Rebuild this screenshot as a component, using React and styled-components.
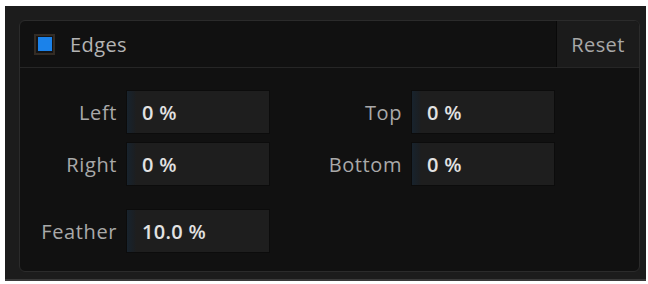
import styled, { createGlobalStyle } from 'styled-components'

const GlobalStyle = createGlobalStyle`
    html, body {
        margin: 0;
        padding: 0;
        background: #ffffff;
    }
    * {
        box-sizing: border-box;
    }
`

const rows = [
    [
        { label: 'Left', value: '0 %' },
        { label: 'Top', value: '0 %' },
    ],
    [
        { label: 'Right', value: '0 %' },
        { label: 'Bottom', value: '0 %' },
    ],
]

function App() {
    return (
        <>
            <GlobalStyle />
            <Frame>
                <Panel>
                    <Header>
                        <Title>
                            <Checkbox>
                                <Check />
                            </Checkbox>
                            <span>Edges</span>
                        </Title>
                        <ResetButton>Reset</ResetButton>
                    </Header>
                    <Body>
                        <Grid>
                            {rows.map((row, i) =>
                                row.map((field) => (
                                    <Field key={field.label + i}>
                                        <Label>{field.label}</Label>
                                        <Input>{field.value}</Input>
                                    </Field>
                                ))
                            )}
                        </Grid>
                        <FeatherRow>
                            <Field>
                                <Label>Feather</Label>
                                <Input>10.0 %</Input>
                            </Field>
                        </FeatherRow>
                    </Body>
                </Panel>
            </Frame>
        </>
    )
}

const Frame = styled.div`
    margin: 6px 2px 3px 5px;
    height: 275px;
    background: #1c1c1c;
    border-bottom: 2px solid #3a3a3a;
    padding: 14px 6px 7px 14px;
    font-family: 'Open Sans', 'Noto Sans', sans-serif;
`

const Panel = styled.div`
    height: 100%;
    background: #111111;
    border: 1px solid #2b2b2b;
    border-radius: 6px;
    overflow: hidden;
    display: flex;
    flex-direction: column;
`

const Header = styled.div`
    display: flex;
    align-items: stretch;
    height: 47px;
    border-bottom: 1px solid #262626;
`

const Title = styled.div`
    flex: 1;
    display: flex;
    align-items: center;
    gap: 15px;
    padding-left: 14px;
    color: #b4b4b4;
    font-size: 20px;
    letter-spacing: 0.4px;
`

const Checkbox = styled.div`
    width: 21px;
    height: 21px;
    border: 2px solid #332c25;
    background: #151515;
    display: flex;
    align-items: center;
    justify-content: center;
`

const Check = styled.div`
    width: 14px;
    height: 14px;
    background: #1b82ea;
`

const ResetButton = styled.div`
    width: 83px;
    display: flex;
    align-items: center;
    justify-content: center;
    background: #1b1b1b;
    border-left: 1px solid #090909;
    color: #a8a8a8;
    font-size: 20px;
    letter-spacing: 0.4px;
`

const Body = styled.div`
    padding: 22px 0 0 19px;
`

const Grid = styled.div`
    display: grid;
    grid-template-columns: 231px 285px;
    row-gap: 8px;
`

const Field = styled.div`
    display: flex;
    justify-content: flex-end;
    align-items: center;
    gap: 9px;
`

const FeatherRow = styled.div`
    margin-top: 23px;
    width: 231px;
    display: flex;
    justify-content: flex-end;
`

const Label = styled.div`
    color: #a9a9a9;
    font-size: 20px;
    letter-spacing: 0.6px;
    white-space: nowrap;
`

const Input = styled.div`
    width: 144px;
    height: 44px;
    display: flex;
    align-items: center;
    padding-left: 15px;
    background: linear-gradient(90deg, #18232d 0px, #1b1f23 7px, #1e1e1e 9px, #1e1e1e 100%);
    border: 1px solid #0c0c0c;
    color: #e2e2e2;
    font-size: 20px;
    font-weight: 600;
    letter-spacing: 0.3px;
`

export default App
